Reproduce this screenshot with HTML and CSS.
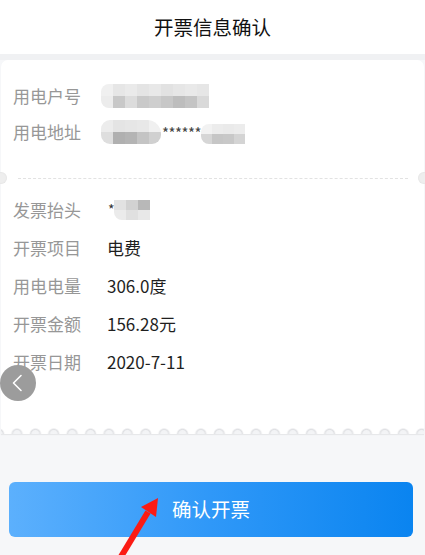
FILE: index.html
```html
<!DOCTYPE html>
<html lang="zh-CN">
<head>
<meta charset="utf-8">
<title>开票信息确认</title>
<link rel="stylesheet" href="styles.css">
</head>
<body>
<div class="page">
  <header class="topbar">开票信息确认</header>
  <div class="gap"></div>
  <section class="card">
    <div class="sec sec-top">
      <div class="row"><span class="label">用电户号</span>
        <span class="mosaic m1">
          <i style="background:#f0f0f0"></i><i style="background:#e6e6e6"></i><i style="background:#eaeaea"></i><i style="background:#e4e4e4"></i><i style="background:#e8e8e8"></i><i style="background:#e2e2e2"></i><i style="background:#e6e6e6"></i><i style="background:#e9e9e9"></i><i style="background:#e6e6e6"></i>
          <i style="background:#ececec"></i><i style="background:#c8c8c8"></i><i style="background:#dcdcdc"></i><i style="background:#c9c9c9"></i><i style="background:#cecece"></i><i style="background:#c7c7c7"></i><i style="background:#bdbdbd"></i><i style="background:#c4c4c4"></i><i style="background:#d9d9d9"></i>
        </span>
      </div>
      <div class="row"><span class="label">用电地址</span>
        <span class="addr">
          <span class="mosaic m2">
            <i style="background:#ececec"></i><i style="background:#e4e4e4"></i><i style="background:#e6e6e6"></i><i style="background:#e8e8e8"></i><i style="background:#f0f0f0"></i>
            <i style="background:#dedede"></i><i style="background:#b0b0b0"></i><i style="background:#b4b4b4"></i><i style="background:#c4c4c4"></i><i style="background:#d0d0d0"></i>
          </span>
          <span class="stars">******</span>
          <span class="mosaic m3">
            <i style="background:#f2f2f2"></i><i style="background:#ececec"></i><i style="background:#eaeaea"></i><i style="background:#ececec"></i>
            <i style="background:#d6d6d6"></i><i style="background:#c6c6c6"></i><i style="background:#c8c8c8"></i><i style="background:#d4d4d4"></i>
          </span>
        </span>
      </div>
    </div>
    <div class="divider"></div>
    <div class="sec sec-bottom">
      <div class="row"><span class="label">发票抬头</span>
        <span class="title-val"><span class="star1">*</span><span class="mosaic m4"><i style="background:#e2e2e2"></i><i style="background:#d2d2d2"></i><i style="background:#b8b8b8"></i><i style="background:#ebebeb"></i><i style="background:#e0e0e0"></i><i style="background:#e8e8e8"></i></span></span>
      </div>
      <div class="row"><span class="label">开票项目</span><span class="value">电费</span></div>
      <div class="row"><span class="label">用电电量</span><span class="value">306.0度</span></div>
      <div class="row"><span class="label">开票金额</span><span class="value">156.28元</span></div>
      <div class="row"><span class="label">开票日期</span><span class="value">2020-7-11</span></div>
    </div>
    <div class="scallop"></div>
  </section>
  <div class="actions">
    <button class="confirm">确认开票</button>
  </div>

  <button class="back" aria-label="返回">
    <svg width="36" height="36" viewBox="0 0 36 36"><path d="M21 10.5 L13.5 18 L21 25.5" fill="none" stroke="#fff" stroke-width="1.6" stroke-linecap="round" stroke-linejoin="round"/></svg>
  </button>

  <svg class="arrow" width="425" height="555" viewBox="0 0 425 555">
    <path d="M119 560 L148 512" stroke="#fb1b14" stroke-width="6" fill="none"/>
    <polygon points="158,498 141,507 156,517" fill="#fb1b14"/>
  </svg>
</div>
</body>
</html>
```

FILE: styles.css
```css
* { box-sizing: border-box; }
html, body {
  margin: 0;
  padding: 0;
  background: #f6f7f9;
}
body {
  font-family: "Noto Sans CJK SC", "Noto Sans", sans-serif;
  width: 425px;
  height: 555px;
  overflow: hidden;
}
.page {
  position: relative;
  width: 425px;
  height: 555px;
  background: #f6f7f9;
}
.topbar {
  height: 54px;
  background: #fff;
  display: flex;
  align-items: center;
  justify-content: center;
  font-size: 19.5px;
  color: #111;
  padding-bottom: 2px;
}
.gap {
  height: 6px;
  background: #f0f1f3;
}
.card {
  position: relative;
  margin: 0 1px;
  background: #fff;
  border-radius: 7px 7px 0 0;
}
.sec-top {
  padding: 17px 0 29px;
}
.sec-bottom {
  padding: 11px 0 47px;
}
.sec-top .row { height: 36px; }
.sec-bottom .row { height: 38px; }
.row {
  display: flex;
  align-items: center;
  padding-left: 12px;
}
.label {
  width: 94px;
  font-size: 17px;
  color: #979797;
  flex: none;
}
.value {
  font-size: 17px;
  color: #1f1f1f;
}
.mosaic {
  display: grid;
  grid-auto-rows: 12px;
  filter: blur(0.6px);
  border-radius: 8px 0 0 8px;
  overflow: hidden;
}
.mosaic i { display: block; }
.m1 {
  grid-template-columns: repeat(9, 12px);
  margin-left: -6px;
  margin-top: 2px;
}
.addr {
  display: flex;
  align-items: center;
  margin-left: -6px;
}
.m2 {
  grid-template-columns: repeat(5, 12px);
  border-radius: 9px 14px 9px 9px;
  margin-top: 2px;
}
.m3 {
  grid-template-columns: repeat(4, 11px);
  grid-auto-rows: 10px;
  border-radius: 8px 0 0 8px;
  margin-top: 6px;
}
.stars {
  font-size: 15px;
  color: #444;
  letter-spacing: -0.5px;
  margin: 0 0 0 1px;
  width: 39px;
  padding-top: 3px;
  white-space: nowrap;
  overflow: hidden;
}
.title-val {
  display: flex;
  align-items: center;
}
.star1 {
  font-size: 14px;
  color: #333;
  margin-left: 1px;
  width: 6px;
}
.m4 {
  grid-template-columns: repeat(3, 12px);
  grid-auto-rows: 10px;
  border-radius: 0 0 0 8px;
  margin-top: 2px;
}
.divider {
  position: relative;
  height: 0;
  margin: 0 16px 0 17px;
  border-top: 1px dashed #e2e2e2;
}
.divider::before,
.divider::after {
  content: "";
  position: absolute;
  top: -7px;
  width: 12px;
  height: 12px;
  border-radius: 50%;
  background: #eeeeee;
  box-shadow: inset 0 0 2px rgba(0,0,0,0.08);
}
.divider::before { left: -23px; }
.divider::after { right: -22px; }
.scallop {
  height: 7px;
  background-color: #fff;
  background-image: radial-gradient(circle at 50% 100%, #f4f5f7 0, #f2f3f5 3.5px, #dfe0e3 4.6px, #fff 6.2px);
  background-size: 18.4px 7px;
  background-position: 6.8px 0;
  background-repeat: repeat-x;
  box-shadow: 0 1px 1px rgba(0,0,0,0.06);
}
.actions {
  padding: 48px 12px 0 9px;
}
.confirm {
  display: flex;
  align-items: center;
  justify-content: center;
  width: 100%;
  height: 55px;
  border: none;
  border-radius: 6px;
  background: linear-gradient(90deg, #5cb0fd 0%, #2f98f8 50%, #0a84f0 100%);
  color: #fff;
  font-family: inherit;
  font-size: 19.5px;
  padding: 0 0 2px;
}
.back {
  position: absolute;
  left: 0;
  top: 365px;
  width: 36px;
  height: 36px;
  border-radius: 50%;
  border: none;
  padding: 0;
  background: #9c9c9c;
  display: flex;
  align-items: center;
  justify-content: center;
}
.back svg { display: block; }
.arrow {
  position: absolute;
  left: 0;
  top: 0;
  pointer-events: none;
}
```
